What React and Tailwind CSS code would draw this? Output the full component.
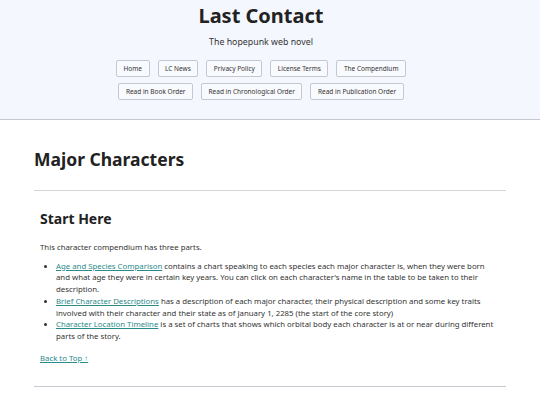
export default function App() {
  const nav1 = ["Home", "LC News", "Privacy Policy", "License Terms", "The Compendium"];
  const nav2 = ["Read in Book Order", "Read in Chronological Order", "Read in Publication Order"];

  return (
    <div className="min-h-[405px] bg-white text-[#333] font-['Noto_Sans',sans-serif]">
      {/* Header */}
      <header className="bg-[#f5f7fe] border-b border-[#c9c7d1] pt-[1px] pb-[19px] pr-[18px] text-center">
        <h1 className="text-[20px] leading-[30px] font-bold text-[#222]">Last Contact</h1>
        <p className="mt-[5px] text-[8.8px] leading-[12px]">The hopepunk web novel</p>
        <nav className="mt-[12px] flex flex-col items-center gap-[6px]">
          <div className="flex gap-[8px]">
            {nav1.map((item) => (
              <a
                key={item}
                href="#"
                className="h-[17px] px-[6.5px] flex items-center border border-[#c5c8d2] rounded-[2px] bg-white/40 text-[6.5px] text-[#333]"
              >
                {item}
              </a>
            ))}
          </div>
          <div className="flex gap-[8px]">
            {nav2.map((item) => (
              <a
                key={item}
                href="#"
                className="h-[17px] px-[6.5px] flex items-center border border-[#c5c8d2] rounded-[2px] bg-white/40 text-[6.5px] text-[#333]"
              >
                {item}
              </a>
            ))}
          </div>
        </nav>
      </header>

      {/* Main */}
      <main className="max-w-[472px] mx-auto">
        <h2 className="pt-[27px] pb-[19px] text-[17.5px] leading-[24px] font-bold text-[#222]">Major Characters</h2>
        <hr className="border-t border-[#d6d6d6]" />

        <section className="px-[6px] pt-[18px] pb-[22px] text-[7.8px] leading-[11.7px]">
          <h3 className="text-[14px] leading-[20px] font-bold text-[#222]">Start Here</h3>
          <p className="mt-[13px]">This character compendium has three parts.</p>
          <ul className="mt-[7px] pl-[16px] list-disc">
            <li>
              <a href="#" className="text-[#2a8b8b] underline">Age and Species Comparison</a> contains a chart speaking to each species each major character is, when they were born and what age they were in certain key years. You can click on each character's name in the table to be taken to their description.
            </li>
            <li>
              <a href="#" className="text-[#2a8b8b] underline">Brief Character Descriptions</a> has a description of each major character, their physical description and some key traits involved with their character and their state as of January 1, 2285 (the start of the core story)
            </li>
            <li>
              <a href="#" className="text-[#2a8b8b] underline">Character Location Timeline</a> is a set of charts that shows which orbital body each character is at or near during different parts of the story.
            </li>
          </ul>
          <p className="mt-[10px]">
            <a href="#" className="text-[#2a8b8b] underline">Back to Top ↑</a>
          </p>
        </section>
        <hr className="border-t border-[#c9c7d1]" />
      </main>
    </div>
  );
}
